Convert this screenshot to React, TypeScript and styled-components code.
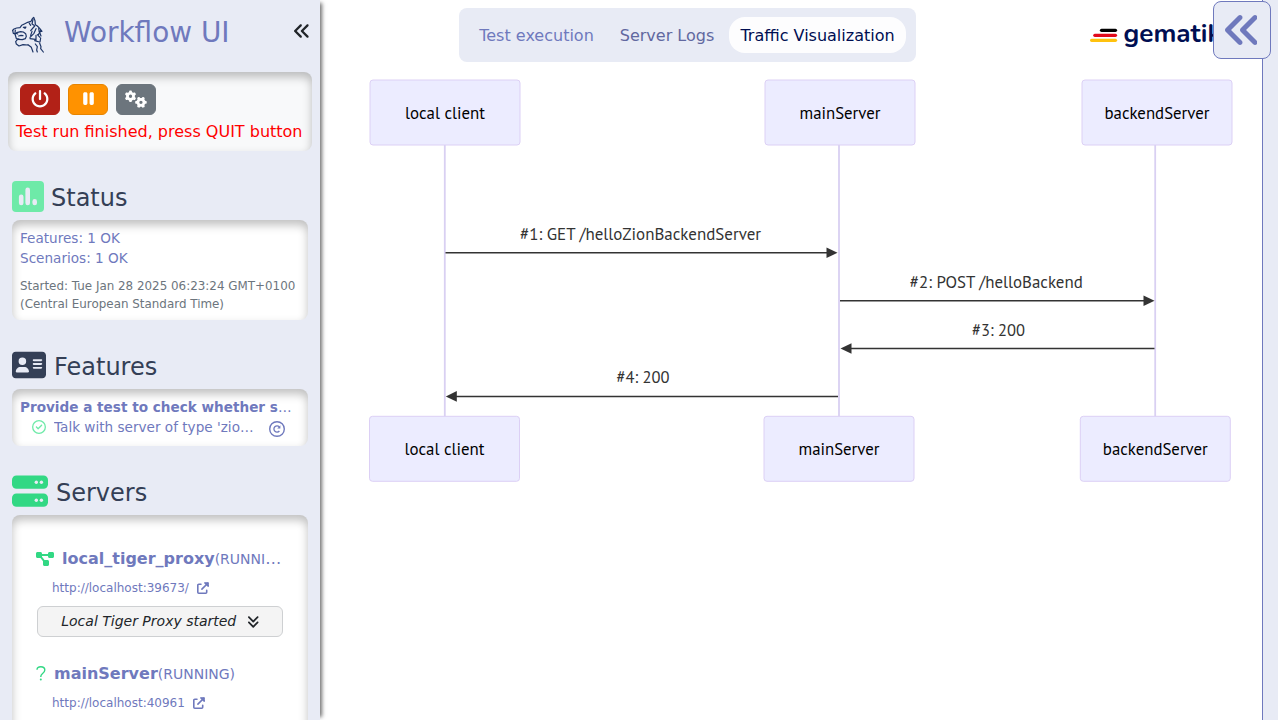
import React from "react";
import styled, { createGlobalStyle } from "styled-components";
import {
  FaPowerOff,
  FaPause,
  FaGears,
  FaAddressCard,
  FaRegCircleCheck,
  FaDiagramProject,
} from "react-icons/fa6";

const Global = createGlobalStyle`
  *, *::before, *::after { box-sizing: border-box; }
  html, body { margin: 0; padding: 0; background: #fff; overflow: hidden; }
  body { font-family: "DejaVu Sans", sans-serif; font-size: 16px; line-height: 1.5; color: #212529; }
  svg { display: block; flex: none; }
`;

const Page = styled.div`
  display: flex;
  width: 1280px;
  height: 720px;
  overflow: hidden;
  position: relative;
`;

const Sidebar = styled.aside`
  width: 320px;
  height: 720px;
  flex: none;
  background: #e8ebf5;
  box-shadow: 5px 0 4px -3px #707070;
  z-index: 1;
  padding: 0 8px;
  display: flex;
  flex-direction: column;
`;

const Brand = styled.div`
  height: 72px;
  flex: none;
  display: flex;
  align-items: flex-start;
  color: #6f79bd;
`;

const BrandName = styled.div`
  font-size: 27.9px;
  line-height: 34px;
  padding: 16px 0 0 16px;
  flex: 1;
  white-space: nowrap;
`;

const Collapse = styled.div`
  color: #212529;
  padding: 22px 3px 0 0;
`;

const Panel = styled.div<{ $bg?: string }>`
  flex: none;
  border-radius: 8px;
  background: ${(p) => p.$bg ?? "#fff"};
  box-shadow: inset 0 5px 10px rgba(0, 0, 0, 0.25);
`;

const ControlPanel = styled(Panel)`
  height: 79px;
  padding: 12px 8px 0;
`;

const Buttons = styled.div`
  display: flex;
  gap: 8px;
  padding-left: 4px;
`;

const ControlButton = styled.div<{ $bg: string; $border: string }>`
  width: 40px;
  height: 31px;
  border-radius: 6px;
  border: 1px solid ${(p) => p.$border};
  background: ${(p) => p.$bg};
  color: #fff;
  display: flex;
  align-items: center;
  justify-content: center;
  padding-bottom: 2px;
`;

const QuitMessage = styled.div`
  color: #f00;
  line-height: 24px;
  margin-top: 5px;
  white-space: nowrap;
`;

const Section = styled.section<{ $top: number }>`
  margin: ${(p) => p.$top}px 4px 0;
  flex: none;
`;

const Heading = styled.div<{ $color: string; $gap: number }>`
  display: flex;
  align-items: center;
  gap: ${(p) => p.$gap}px;
  height: 32px;
  margin-bottom: 8px;
  font-size: 24px;
  color: #343f56;
  & > svg { color: ${(p) => p.$color}; }
  & > span { padding-top: 3px; }
`;

const StatusPanel = styled(Panel)`
  height: 100px;
  padding: 8px;
  font-size: 13.6px;
  line-height: 20px;
  color: #6f79bd;
  white-space: nowrap;
`;

const Started = styled.div`
  margin-top: 9px;
  font-size: 11.92px;
  line-height: 18px;
  color: #6c757d;
`;

const FeaturePanel = styled(Panel)`
  height: 57px;
  padding: 8px;
  font-size: 13.6px;
  line-height: 20px;
  color: #6f79bd;
`;

const FeatureName = styled.div`
  width: 274px;
  overflow: hidden;
  white-space: nowrap;
  text-overflow: ellipsis;
`;

const Scenario = styled.div`
  display: flex;
  align-items: center;
  padding: 0 14px 0 12px;
  height: 20px;
`;

const ScenarioName = styled.div`
  width: 202px;
  margin: 0 13px 0 8px;
  overflow: hidden;
  white-space: nowrap;
  text-overflow: ellipsis;
`;

const Replay = styled.div`
  padding-top: 3px;
`;

const ServerPanel = styled(Panel)`
  height: 320px;
  padding: 28px 24px 0;
  color: #6f79bd;
`;

const Server = styled.div`
  height: 115px;
`;

const ServerTitle = styled.div`
  display: flex;
  align-items: center;
  height: 31px;
  gap: 8px;
  & > svg { color: #32d884; }
`;

const ServerName = styled.div`
  flex: 1;
  min-width: 0;
  overflow: hidden;
  white-space: nowrap;
  span { font-size: 14px; }
`;

const ServerLink = styled.div`
  display: flex;
  align-items: center;
  gap: 8px;
  height: 28px;
  padding-left: 16px;
  font-size: 12px;
`;

const ServerState = styled.div`
  display: flex;
  align-items: center;
  justify-content: center;
  gap: 12px;
  width: 246px;
  height: 31px;
  margin: 4px 0 0 1px;
  border: 1px solid #ced0d2;
  border-radius: 6px;
  background: #f4f4f4;
  color: #212529;
  font-size: 14px;
  font-style: italic;
  white-space: nowrap;
`;

const Main = styled.main`
  width: 942px;
  flex: none;
  height: 720px;
`;

const Header = styled.header`
  display: flex;
  height: 70px;
  padding: 8px 0 0 139px;
`;

const Tabs = styled.nav`
  display: flex;
  align-items: center;
  width: 457px;
  height: 54px;
  padding: 0 9px;
  border-radius: 8px;
  background: #e8ebf5;
`;

const Tab = styled.div<{ $color: string; $active?: boolean; $width: number }>`
  width: ${(p) => p.$width}px;
  height: 36px;
  line-height: 36px;
  padding-top: 1px;
  text-align: center;
  white-space: nowrap;
  border-radius: 16px;
  color: ${(p) => p.$color};
  background: ${(p) => (p.$active ? "#fdfdfe" : "transparent")};
`;

const Logo = styled.div`
  margin-left: 174px;
  padding-top: 12px;
`;

const Drawer = styled.div`
  width: 16px;
  height: 720px;
  flex: none;
  border-left: 1px solid #6f79bd;
  background: #e8ebf5;
`;

const DrawerToggle = styled.div`
  position: absolute;
  left: 1213px;
  top: 1px;
  width: 58px;
  height: 58px;
  border: 1px solid #6f79bd;
  border-radius: 8px;
  background: #e8ebf5;
  color: #6f79bd;
  display: flex;
  align-items: center;
  justify-content: center;
  padding: 0 2px 1px 0;
`;

const TigerMark = styled.svg`
  margin-top: 12px;
`;

const Tiger = () => (
  <TigerMark width="40" height="45" viewBox="24 36 120 135" fill="none" stroke="#1d3566" strokeWidth="3.6" strokeLinejoin="round" strokeLinecap="round">
    <path d="M38 91l4-4 8-3 10-1 5-7 8-4 10-5 10-3 4-8 4-4 4 10 1 12 6 4 7 7 7 9-5 0-3 0 5 14" />
    <path d="M38 91l2 9 6 2M46 90l-1 9 8 3M50 98l12-3 8 1 7 5 2 8-3 7-9 3-14-1M56 108l7-2 6 1" />
    <path d="M45 102l4 14 8 1M52 119l-5 6 2 7 8 6 12-4 14 1" />
    <path d="M70 82l8-1-3 4zM88 70l4 6M99 58l-3 14 6 4M104 78l-12 14M96 94l-4 12M108 86l-6 14-12 12M116 86l2 10M122 92l-8 14M90 116l16 2M112 104l8 8M104 122l14 4M108 106l0 14" />
    <path d="M84 134l10 8 5 14M106 132l6 8-2 10 2 6M119 130l4 10-1 6 8 10M122 114l-2 12" />
  </TigerMark>
);

const anglesPath =
  "M77.250 256l137.400-137.400c12.500-12.500 12.500-32.750 0-45.250s-32.750-12.500-45.250 0l-160 160c-12.500 12.500-12.500 32.750 0 45.250l160 160C175.600 444.900 183.800 448 192 448s16.380-3.125 22.620-9.375c12.500-12.500 12.500-32.750 0-45.250L77.250 256zM269.300 256l137.400-137.400c12.500-12.500 12.500-32.750 0-45.250s-32.750-12.500-45.250 0l-160 160c-12.500 12.500-12.500 32.750 0 45.250l160 160C367.600 444.900 375.800 448 384 448s16.380-3.125 22.620-9.375c12.500-12.500 12.500-32.750 0-45.250L269.300 256z";

const AnglesLeft = ({ size }: { size: number }) => (
  <svg width={(size * 416) / 512} height={size} viewBox="0 0 416 512" fill="currentColor">
    <path d={anglesPath} />
  </svg>
);

const AnglesDown = ({ size }: { size: number }) => (
  <svg width={(size * 384) / 512} height={size} viewBox="0 0 384 512" fill="currentColor">
    <path d={anglesPath} transform="translate(-64 464) rotate(-90)" />
  </svg>
);

const ExternalLink = () => (
  <svg width="12" height="12" viewBox="0 0 12 12" fill="none" stroke="currentColor" strokeWidth="1.600" strokeLinecap="round" strokeLinejoin="round">
    <path d="M4 2.300H1.800a1 1 0 0 0-1 1v6.900a1 1 0 0 0 1 1h6.900a1 1 0 0 0 1-1V8.200" />
    <path d="M4.900 7.100L10.800 1.200" />
    <path d="M7.600.8h3.600v3.600z" fill="currentColor" strokeWidth="1.200" />
  </svg>
);

const ChartIcon = () => (
  <svg width="32" height="31" viewBox="0 0 32 31">
    <rect width="32" height="31" rx="4" fill="currentColor" />
    <g stroke="#e8ebf5" strokeWidth="4.600" strokeLinecap="round">
      <path d="M9.200 15.700V22" />
      <path d="M15.700 8.800V22" />
      <path d="M22.700 20.400V22" />
    </g>
  </svg>
);

const ServersIcon = () => (
  <svg width="36" height="32" viewBox="0 0 36 32">
    <rect y=".500" width="36" height="13.300" rx="4.500" fill="currentColor" />
    <rect y="18.500" width="36" height="13.300" rx="4.500" fill="currentColor" />
    <g fill="#e8ebf5">
      <circle cx="24.300" cy="7.200" r="1.700" />
      <circle cx="29.400" cy="7.200" r="1.700" />
      <circle cx="24.300" cy="25.200" r="1.700" />
      <circle cx="29.400" cy="25.200" r="1.700" />
    </g>
  </svg>
);

const ReplayIcon = () => (
  <svg width="16" height="16" viewBox="0 0 16 16" fill="none" stroke="currentColor">
    <circle cx="8" cy="8" r="7.300" strokeWidth="1.400" />
    <path d="M10.400 10A3.100 3.100 0 1 1 10.300 5.900" strokeWidth="1.300" />
    <path d="M11.400 4.200v3.200H8.200z" fill="currentColor" stroke="none" />
  </svg>
);

const QuestionIcon = () => (
  <svg width="10" height="15" viewBox="0 0 10 15" fill="none" stroke="currentColor" strokeWidth="1.400">
    <path d="M1 3.800C1.100 1.900 2.600.8 4.800.8 7.200.8 8.800 2 8.800 4c0 1.700-.9 2.500-2.200 3.500C5.300 8.500 4.800 9 4.800 10.600V11" />
    <circle cx="4.800" cy="13.500" r="1" fill="currentColor" stroke="none" />
  </svg>
);

const GematikLogo = () => (
  <svg width="140" height="32" viewBox="0 0 140 32">
    <g strokeWidth="3.200" strokeLinecap="round">
      <path d="M11.500 10.300H25.500" stroke="#000" />
      <path d="M4.800 15.300H25.500" stroke="#e20a1b" />
      <path d="M1.600 20.300H25.500" stroke="#ffc20e" />
    </g>
    <text x="33.500" y="21.500" fontFamily='Nunito, "Noto Sans", sans-serif' fontWeight="700" fontSize="26.500" fill="#000e52" textLength="98" lengthAdjust="spacingAndGlyphs">
      gematik
    </text>
  </svg>
);

const diagramFont = '"PT Sans", "Open Sans", sans-serif';

const Actor = ({ x, y, label, w }: { x: number; y: number; label: string; w: number }) => (
  <g>
    <rect x={x} y={y} width="150" height="65" rx="3" fill="#ececff" stroke="#dcd0f5" />
    <text x={x + 75} y={y + 38.500} textAnchor="middle" fontSize="16.700" fill="#000" textLength={w} lengthAdjust="spacingAndGlyphs">
      {label}
    </text>
  </g>
);

const Message = ({ from, to, y, label, w }: { from: number; to: number; y: number; label: string; w: number }) => {
  const dir = to > from ? 1 : -1;
  return (
    <g>
      <text x={(from + to) / 2 - 1 + (dir < 0 ? 2 : 0)} y={y - 13} textAnchor="middle" fontSize="16.700" fill="#333" textLength={w} lengthAdjust="spacingAndGlyphs">
        {label}
      </text>
      <path d={`M${from} ${y}H${to - dir * 8}`} stroke="#333" strokeWidth="1.500" />
      <path d={`M${to} ${y}l${-dir * 11} -5.300v10.600z`} fill="#333" />
    </g>
  );
};

const Diagram = () => (
  <svg width="942" height="430" viewBox="320 70 942 430" fontFamily={diagramFont}>
    <g stroke="#d9d0f2" strokeWidth="1.800">
      <path d="M444.800 145V417" />
      <path d="M839 145V417" />
      <path d="M1155.200 145V417" />
    </g>
    <Actor x={370} y={80} label="local client" w={80} />
    <Actor x={765} y={80} label="mainServer" w={81} />
    <Actor x={1082} y={80} label="backendServer" w={105} />
    <Actor x={369.500} y={416.300} label="local client" w={80} />
    <Actor x={764} y={416.300} label="mainServer" w={81} />
    <Actor x={1080.300} y={416.300} label="backendServer" w={105} />
    <Message from={445.500} to={837.500} y={252.800} label="#1: GET /helloZionBackendServer" w={241} />
    <Message from={840} to={1154.500} y={300.700} label="#2: POST /helloBackend" w={173} />
    <Message from={1154.500} to={840.500} y={348.500} label="#3: 200" w={53} />
    <Message from={838} to={445.800} y={396.400} label="#4: 200" w={53} />
  </svg>
);

export default function App() {
  return (
    <Page>
      <Global />
      <Sidebar>
        <Brand>
          <Tiger />
          <BrandName>Workflow UI</BrandName>
          <Collapse><AnglesLeft size={18} /></Collapse>
        </Brand>
        <ControlPanel $bg="#f8f9fa">
          <Buttons>
            <ControlButton $bg="#b22117" $border="#b22117"><FaPowerOff size={18} /></ControlButton>
            <ControlButton $bg="#ff9200" $border="#e78500"><FaPause size={17} /></ControlButton>
            <ControlButton $bg="#6c757d" $border="#6c757d"><FaGears size={22} /></ControlButton>
          </Buttons>
          <QuitMessage>Test run finished, press QUIT button</QuitMessage>
        </ControlPanel>
        <Section $top={29}>
          <Heading $color="#6eeaa8" $gap={7}><ChartIcon /><span>Status</span></Heading>
          <StatusPanel>
            <div>Features: 1 OK</div>
            <div>Scenarios: 1 OK</div>
            <Started>Started: Tue Jan 28 2025 06:23:24 GMT+0100<br />(Central European Standard Time)</Started>
          </StatusPanel>
        </Section>
        <Section $top={29}>
          <Heading $color="#343f56" $gap={8}><FaAddressCard size={34} /><span>Features</span></Heading>
          <FeaturePanel>
            <FeatureName><b>Provide a test to check whether s</b>…</FeatureName>
            <Scenario>
              <FaRegCircleCheck size={14} color="#6eeaa8" />
              <ScenarioName>Talk with server of type 'zio…</ScenarioName>
              <Replay><ReplayIcon /></Replay>
            </Scenario>
          </FeaturePanel>
        </Section>
        <Section $top={29}>
          <Heading $color="#32d884" $gap={8}><ServersIcon /><span>Servers</span></Heading>
          <ServerPanel>
            <Server>
              <ServerTitle>
                <FaDiagramProject size={18} />
                <ServerName><b>local_tiger_proxy</b><span>(RUNNI</span>…</ServerName>
              </ServerTitle>
              <ServerLink>http://localhost:39673/<ExternalLink /></ServerLink>
              <ServerState>Local Tiger Proxy started<AnglesDown size={14} /></ServerState>
            </Server>
            <Server>
              <ServerTitle>
                <QuestionIcon />
                <ServerName><b>mainServer</b><span>(RUNNING)</span></ServerName>
              </ServerTitle>
              <ServerLink>http://localhost:40961<ExternalLink /></ServerLink>
            </Server>
          </ServerPanel>
        </Section>
      </Sidebar>
      <Main>
        <Header>
          <Tabs>
            <Tab $color="#6f79bd" $width={137}>Test execution</Tab>
            <Tab $color="#6168a0" $width={124}>Server Logs</Tab>
            <Tab $color="#000e52" $active $width={177}>Traffic Visualization</Tab>
          </Tabs>
          <Logo><GematikLogo /></Logo>
        </Header>
        <Diagram />
      </Main>
      <Drawer />
      <DrawerToggle><AnglesLeft size={40} /></DrawerToggle>
    </Page>
  );
}
